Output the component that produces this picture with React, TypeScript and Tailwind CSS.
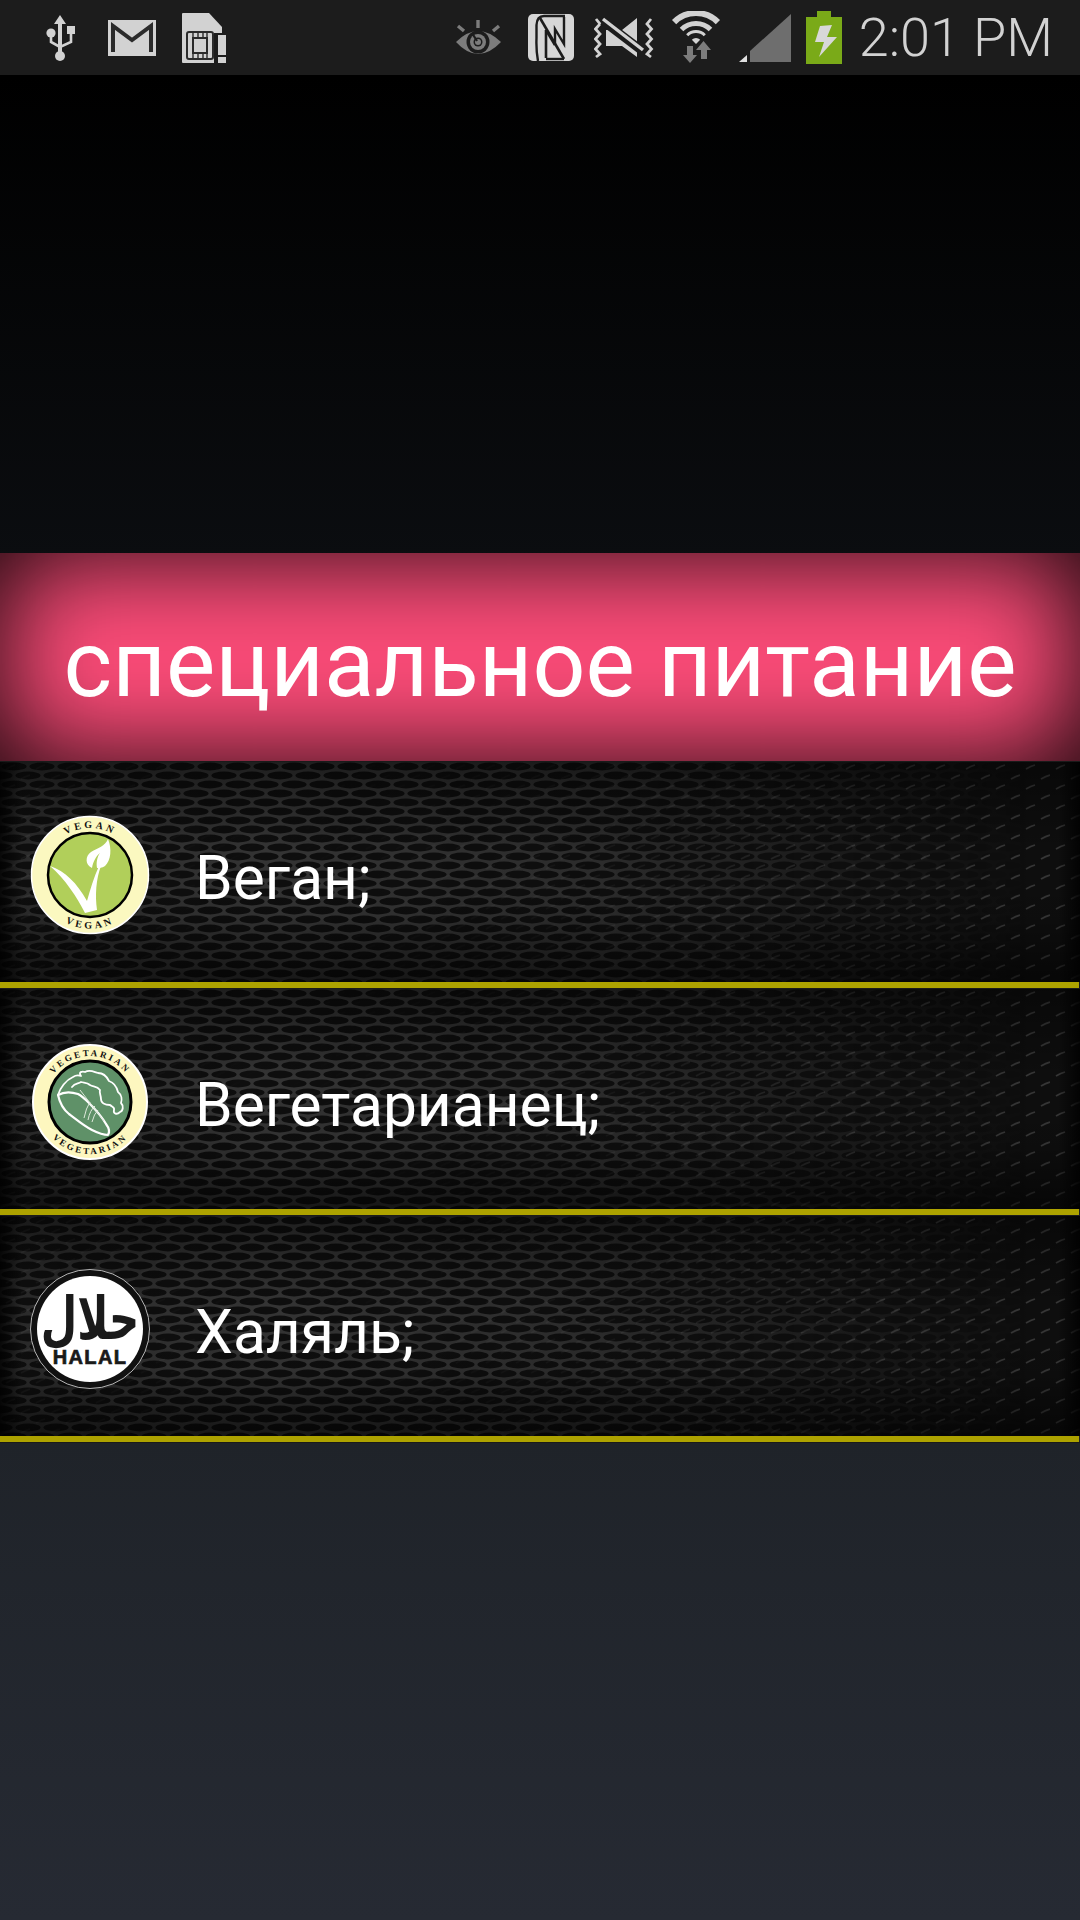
import React from "react";

function Mesh({ id }: { id: string }) {
  return (
    <svg className="absolute inset-0 w-full h-full" width="1080" height="220" aria-hidden="true">
      <defs>
        <pattern id={`${id}-a`} width="28" height="18" patternUnits="userSpaceOnUse">
          <rect width="28" height="18" fill="#343434" />
          <ellipse cx="14" cy="4.5" rx="12.6" ry="3.9" fill="#0e0e0e" />
          <ellipse cx="0" cy="13.5" rx="12.6" ry="3.9" fill="#0e0e0e" />
          <ellipse cx="28" cy="13.5" rx="12.6" ry="3.9" fill="#0e0e0e" />
        </pattern>
        <pattern id={`${id}-b`} width="30" height="20" patternUnits="userSpaceOnUse">
          <rect width="30" height="20" fill="#0e0e0e" />
          <path d="M6 7 Q11 4 15 3 M21 17 Q26 14 30 13" stroke="#363636" strokeWidth="1.7" fill="none" />
        </pattern>
        <linearGradient id={`${id}-f`} x1="0" x2="1" y1="0" y2="0">
          <stop offset="0" stopColor="#bbb" />
          <stop offset="0.25" stopColor="#fff" />
          <stop offset="0.55" stopColor="#ccc" />
          <stop offset="0.95" stopColor="#000" />
        </linearGradient>
        <mask id={`${id}-m`}>
          <rect width="1080" height="220" fill={`url(#${id}-f)`} />
        </mask>
        <linearGradient id={`${id}-v`} x1="0" x2="0" y1="0" y2="1">
          <stop offset="0" stopColor="#000" stopOpacity="0.4" />
          <stop offset="0.4" stopColor="#000" stopOpacity="0" />
          <stop offset="0.7" stopColor="#000" stopOpacity="0.05" />
          <stop offset="1" stopColor="#000" stopOpacity="0.55" />
        </linearGradient>
        <linearGradient id={`${id}-h`} x1="0" x2="1" y1="0" y2="0">
          <stop offset="0" stopColor="#000" stopOpacity="0.8" />
          <stop offset="0.02" stopColor="#000" stopOpacity="0" />
          <stop offset="0.98" stopColor="#000" stopOpacity="0" />
          <stop offset="1" stopColor="#000" stopOpacity="0.8" />
        </linearGradient>
      </defs>
      <rect width="1080" height="220" fill={`url(#${id}-b)`} />
      <rect width="1080" height="220" fill={`url(#${id}-a)`} mask={`url(#${id}-m)`} />
      <rect width="1080" height="220" fill={`url(#${id}-v)`} />
      <rect width="1080" height="220" fill={`url(#${id}-h)`} />
    </svg>
  );
}

const capsFont = "'Liberation Serif', serif";

function VeganBadge() {
  return (
    <svg width="120" height="120" viewBox="-60 -60 120 120" className="shrink-0">
      <circle r="58.5" fill="#fbf8c0" stroke="#fff" strokeWidth="1.5" />
      <circle r="42" fill="#b1cf5a" stroke="#000" strokeWidth="2.5" />
      <path d="M-40 -9 C-25 -4 -13 8 -3 26 C0 15 4 2 9 -9 L11 -9 C6 4 5 20 7 35 L-5 38 C-13 22 -25 4 -40 -9 Z" fill="#fff" />
      <path d="M2 -7 C-5 -10 -5 -19 1 -23 C8 -27 15 -29 18 -36 C22 -26 21 -15 15 -9 C12 -7 9 -7 7 -7 C6 -12 7 -18 10 -22 C6 -19 3 -13 2 -7 Z" fill="#fff" />
      <defs>
        <path id="vt" d="M-47 0 A47 47 0 0 1 47 0" />
        <path id="vb" d="M-53.5 0 A53.5 53.5 0 0 0 53.5 0" />
      </defs>
      <text fontFamily={capsFont} fontSize="10" fontWeight="700" fill="#111" letterSpacing="3" textAnchor="middle">
        <textPath href="#vt" startOffset="50%">VEGAN</textPath>
      </text>
      <text fontFamily={capsFont} fontSize="10" fontWeight="700" fill="#111" letterSpacing="3" textAnchor="middle">
        <textPath href="#vb" startOffset="50%">VEGAN</textPath>
      </text>
    </svg>
  );
}

function VegetarianBadge() {
  return (
    <svg width="120" height="120" viewBox="-60 -60 120 120" className="shrink-0">
      <circle r="57" fill="#fdf7bf" stroke="#fff" strokeWidth="2" />
      <circle r="41" fill="#5f9168" stroke="#000" strokeWidth="3" />
      <path d="M-32 -7 C-30 -14 -24 -22 -17 -25 C-14 -27 -12 -27 -9 -26 C-12 -30 -8 -31 -5 -30 C0 -33 4 -30 8 -29 C13 -29 17 -25 19 -21 C25 -19 27 -14 28 -10 C32 -7 32 -2 31 1 C34 4 33 9 30 10 C27 13 23 12 24 8 C25 5 22 5 20 3 C15 3 11 1 11 -3 C11 -7 9 -9 10 -12 C7 -16 3 -15 0 -17 C-3 -20 -6 -19 -9 -20 C-12 -18 -15 -19 -18 -15" fill="none" stroke="#fff" strokeWidth="1.8" strokeLinejoin="round" strokeLinecap="round" />
      <path d="M-32 -7 C-30 2 -26 8 -21 12 C-13 18 -6 24 2 28 C8 31 14 33 18 33 C20 30 19 26 16 22 C12 15 6 8 -1 1 C-5 -3 -8 -6 -12 -8 C-18 -10 -25 -11 -32 -7 Z" fill="none" stroke="#fff" strokeWidth="2.2" strokeLinejoin="round" />
      <path d="M-6 16 Q-4 6 0 0 M-2 18 Q0 8 5 4 M2 20 Q4 12 8 8 M-10 -12 L14 19" fill="none" stroke="#dfe9dc" strokeWidth="1" />
      <defs>
        <path id="gt" d="M-46 0 A46 46 0 0 1 46 0" />
        <path id="gb" d="M-52 0 A52 52 0 0 0 52 0" />
      </defs>
      <text fontFamily={capsFont} fontSize="9" fontWeight="700" fill="#111" letterSpacing="2.4" textAnchor="middle">
        <textPath href="#gt" startOffset="50%">VEGETARIAN</textPath>
      </text>
      <text fontFamily={capsFont} fontSize="9" fontWeight="700" fill="#111" letterSpacing="2.4" textAnchor="middle">
        <textPath href="#gb" startOffset="50%">VEGETARIAN</textPath>
      </text>
    </svg>
  );
}

function HalalBadge() {
  return (
    <svg width="120" height="120" viewBox="-60 -60 120 120" className="shrink-0">
      <circle r="59.5" fill="#111" stroke="#ddd" strokeWidth="0.8" />
      <circle r="53" fill="#fff" />
      <text x="0" y="7" transform="scale(1 1.4)" textAnchor="middle" fontFamily="'DejaVu Sans', sans-serif" fontWeight="700" fontSize="42" fill="#1a1a1a">حلال</text>
      <text x="0" y="35" textAnchor="middle" fontFamily="'Liberation Sans', sans-serif" fontWeight="700" fontSize="20" letterSpacing="1.4" fill="#1a1a1a" stroke="#1a1a1a" strokeWidth="0.7">HALAL</text>
    </svg>
  );
}

function Row({ id, badge, label }: { id: string; badge: React.ReactNode; label: string }) {
  return (
    <div className="flex flex-col">
      <div className="relative h-[220px] pt-[6px] flex items-center overflow-hidden bg-[#0c0c0c]">
        <Mesh id={id} />
        <div className="relative w-[195px] pl-[30px] shrink-0">{badge}</div>
        <span className="relative mt-[8px] text-white text-[60.5px] leading-none font-[Roboto,sans-serif]">{label}</span>
      </div>
      <div className="h-[6px] mr-px bg-[#ada200]" />
      <div className="h-px bg-[#1a1a1a]" />
    </div>
  );
}

function StatusIcons() {
  const light = "#d2d2d2";
  const dark = "#1c1c1c";
  const grey = "#7c7c7c";
  return (
    <>
      <div className="flex items-center pl-[46px]">
        <svg width="30" height="46" viewBox="46 14 30 46" className="mr-[32px]">
          <path d="M60 14 L66 23 L62 23 L62 52 L58 52 L58 23 L54 23 Z" fill={light} />
          <circle cx="60" cy="55" r="5" fill={light} />
          <circle cx="51" cy="32" r="4.6" fill={light} />
          <rect x="67" y="25" width="8" height="8" fill={light} />
          <path d="M51 35 L51 41 L60 46 L71 41 L71 32" fill="none" stroke={light} strokeWidth="2.6" />
        </svg>
        <svg width="48" height="36" viewBox="108 19 48 36" className="mr-[26px]">
          <rect x="108" y="19" width="48" height="36" fill={light} />
          <path d="M113 51 L113 25 L132 39 L151 25 L151 51" fill="none" stroke="#2b2b2b" strokeWidth="4" />
        </svg>
        <svg width="45" height="52" viewBox="182 11 45 52">
          <path d="M182 13 Q182 12 183 12 L209 12 L222 26 L222 62 L183 62 Q182 62 182 61 Z" fill={light} />
          <rect x="187" y="31" width="26" height="27" rx="2" fill={light} stroke="#2b2b2b" strokeWidth="2" />
          <rect x="193" y="37" width="14" height="15" fill={light} stroke="#2b2b2b" strokeWidth="2" />
          <path d="M193 31 V37 M198 31 V37 M203 31 V37 M207 31 V37 M193 52 V58 M198 52 V58 M203 52 V58 M207 52 V58" stroke="#2b2b2b" strokeWidth="1.4" />
          <rect x="214" y="32" width="13" height="31" fill={dark} />
          <rect x="218" y="34" width="8" height="20" fill={light} />
          <rect x="218" y="56" width="8" height="6" fill={light} />
        </svg>
      </div>
      <div className="flex items-center pr-[27px]">
        <svg width="46" height="36" viewBox="457 20 46 36" className="mr-[26px]">
          <path d="M457 42 Q479 20 502 42 Q479 66 457 42 Z" fill={grey} />
          <circle cx="479" cy="42" r="11.5" fill={dark} />
          <circle cx="479" cy="42" r="8" fill={grey} />
          <circle cx="479" cy="42" r="4.5" fill={dark} />
          <circle cx="479" cy="42" r="3" fill={grey} />
          <path d="M473 33 L478 41" stroke={dark} strokeWidth="2.2" />
          <path d="M479 20 V28 M459 26 L465 31 M500 26 L494 31" stroke={grey} strokeWidth="3.4" />
        </svg>
        <svg width="46" height="47" viewBox="529 13 46 47" className="mr-[20px]">
          <rect x="529" y="13" width="46" height="47" rx="5" fill="#d6d6d6" />
          <path d="M539 60 Q537 50 537.5 37 L537.5 24 Q538 15 545 15 L566 15" fill="none" stroke={dark} strokeWidth="2.4" />
          <path d="M541 17 L565 58" stroke={dark} strokeWidth="2.6" />
          <path d="M547 57 L547 29" stroke={dark} strokeWidth="2.6" />
          <path d="M547 29 L556 44" stroke={dark} strokeWidth="2.6" />
          <path d="M556 44 L556 28 L565 43 L565 16" fill="none" stroke={dark} strokeWidth="2.4" />
          <path d="M547 58 L565 58" stroke={dark} strokeWidth="2.4" />
        </svg>
        <svg width="60" height="42" viewBox="595 17 60 42" className="mr-[16px]">
          <path d="M597 19 L601 24 L596.5 29 L601 34 L596.5 39 L601 44 L596.5 49 L601 54 L597 57 M652 19 L648 24 L652.5 29 L648 34 L652.5 39 L648 44 L652.5 49 L648 54 L652 57" fill="none" stroke={light} strokeWidth="2.8" />
          <path d="M607 30 L623 30 L638 18 L638 57 L623 46 L607 46 Z" fill={light} />
          <path d="M604 21 L646 53" stroke={dark} strokeWidth="9" />
          <path d="M604 19 L644 50" stroke={light} strokeWidth="3.4" />
        </svg>
        <svg width="54" height="54" viewBox="671 10 54 54" className="mr-[15px]">
          <path d="M675.1 21.1 A31 31 0 0 1 718.9 21.1" fill="none" stroke={light} strokeWidth="6" />
          <path d="M682.5 28.5 A20.5 20.5 0 0 1 711.5 28.5" fill="none" stroke={light} strokeWidth="5" />
          <path d="M688.2 34.2 A12.5 12.5 0 0 1 705.8 34.2" fill="none" stroke={light} strokeWidth="3" />
          <path d="M697 43 L692.8 38.8 A6 6 0 0 1 701.2 38.8 Z" fill={light} />
          <path d="M688 45 H694 V54 H698 L691 62 L684 54 H688 Z" fill={grey} />
          <path d="M704.5 40 L712 49 H708 V58 H702 V49 H697 Z" fill={grey} />
        </svg>
        <svg width="52" height="48" viewBox="740 15 52 48" className="mr-[15px]">
          <path d="M751 63 L751 52 L792 15 L792 63 Z" fill="#6e6e6e" />
          <path d="M740 63 L748 56 L748 63 Z" fill="#e0e0e0" />
        </svg>
        <svg width="37" height="53" viewBox="807 11 37 53" className="mr-[16px]">
          <path d="M818 11 H832 V17 H843 V64 H807 V17 H818 Z" fill="#7aaa18" />
          <path d="M821 26 L833 25 L828 37 L838 37 L820 57 L825 42 L816 42 Z" fill="#d8d8d8" />
        </svg>
        <span className="text-[#d2d2d2] text-[54px] leading-none font-light font-[Roboto,sans-serif]">2:01 PM</span>
      </div>
    </>
  );
}

export default function App() {
  return (
    <div className="w-[1080px] h-[1920px] flex flex-col bg-[linear-gradient(#000000_4%,#0b0d10_29%,#1f2329_75%,#262a33_100%)] font-[Roboto,sans-serif]">
      <div className="h-[75px] bg-[#1c1c1c] flex items-center justify-between">
        <StatusIcons />
      </div>
      <div className="h-[478px]" />
      <div className="h-[208px] bg-[#ff4d7a] shadow-[inset_0_0_110px_rgba(0,0,0,0.95)] flex items-center justify-center">
        <span className="mt-[14px] text-white text-[93px] leading-none font-[Roboto,sans-serif]">специальное питание</span>
      </div>
      <div className="h-px bg-[#1a1a1a]" />
      <Row id="r1" badge={<VeganBadge />} label="Веган;" />
      <Row id="r2" badge={<VegetarianBadge />} label="Вегетарианец;" />
      <Row id="r3" badge={<HalalBadge />} label="Халяль;" />
    </div>
  );
}
